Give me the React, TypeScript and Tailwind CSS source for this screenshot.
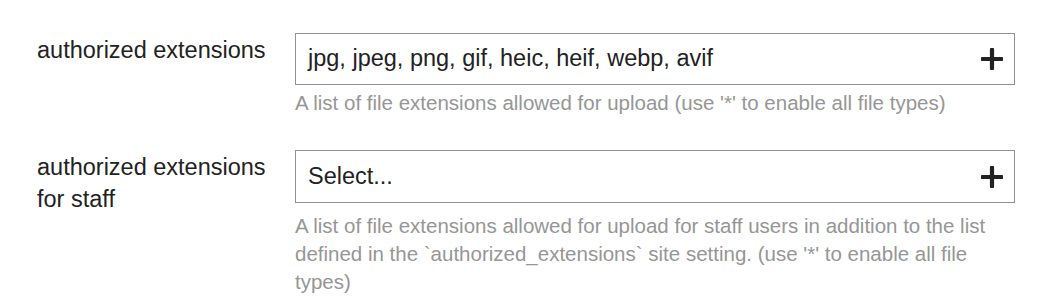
import React from "react";

function Plus() {
  return (
    <svg width="22" height="22" viewBox="0 0 22 22" className="shrink-0">
      <path d="M11 1.5v19M1.5 11h19" stroke="#222222" strokeWidth="4.2" strokeLinecap="round" />
    </svg>
  );
}

function Row({
  label,
  value,
  desc,
  boxClass,
  descClass,
}: {
  label: React.ReactNode;
  value: string;
  desc: React.ReactNode;
  boxClass: string;
  descClass: string;
}) {
  return (
    <div className="flex">
      <div className="w-[258px] shrink-0 pr-4 pt-[1px] text-[23.5px] leading-[32px] text-[#222222]">{label}</div>
      <div className="w-[720px]">
        <div className={`flex items-center justify-between border border-[#919191] pl-[12px] pr-[11px] text-[23.5px] text-[#222222] ${boxClass}`}>
          <span>{value}</span>
          <Plus />
        </div>
        <div className={`text-[20.5px] leading-[28px] text-[#969696] ${descClass}`}>{desc}</div>
      </div>
    </div>
  );
}

export default function App() {
  return (
    <div className="h-[302px] w-[1049px] bg-white pl-[37px] pt-[33px]" style={{ fontFamily: '"Liberation Sans", Arial, sans-serif' }}>
      <div className="flex flex-col gap-[33px]">
        <Row
          label="authorized extensions"
          value="jpg, jpeg, png, gif, heic, heif, webp, avif"
          desc="A list of file extensions allowed for upload (use '*' to enable all file types)"
          boxClass="h-[52px]"
          descClass="mt-[4px]"
        />
        <Row
          label={<>authorized extensions<br />for staff</>}
          value="Select..."
          desc="A list of file extensions allowed for upload for staff users in addition to the list defined in the `authorized_extensions` site setting. (use '*' to enable all file types)"
          boxClass="h-[53px]"
          descClass="mt-[9px]"
        />
      </div>
    </div>
  );
}
